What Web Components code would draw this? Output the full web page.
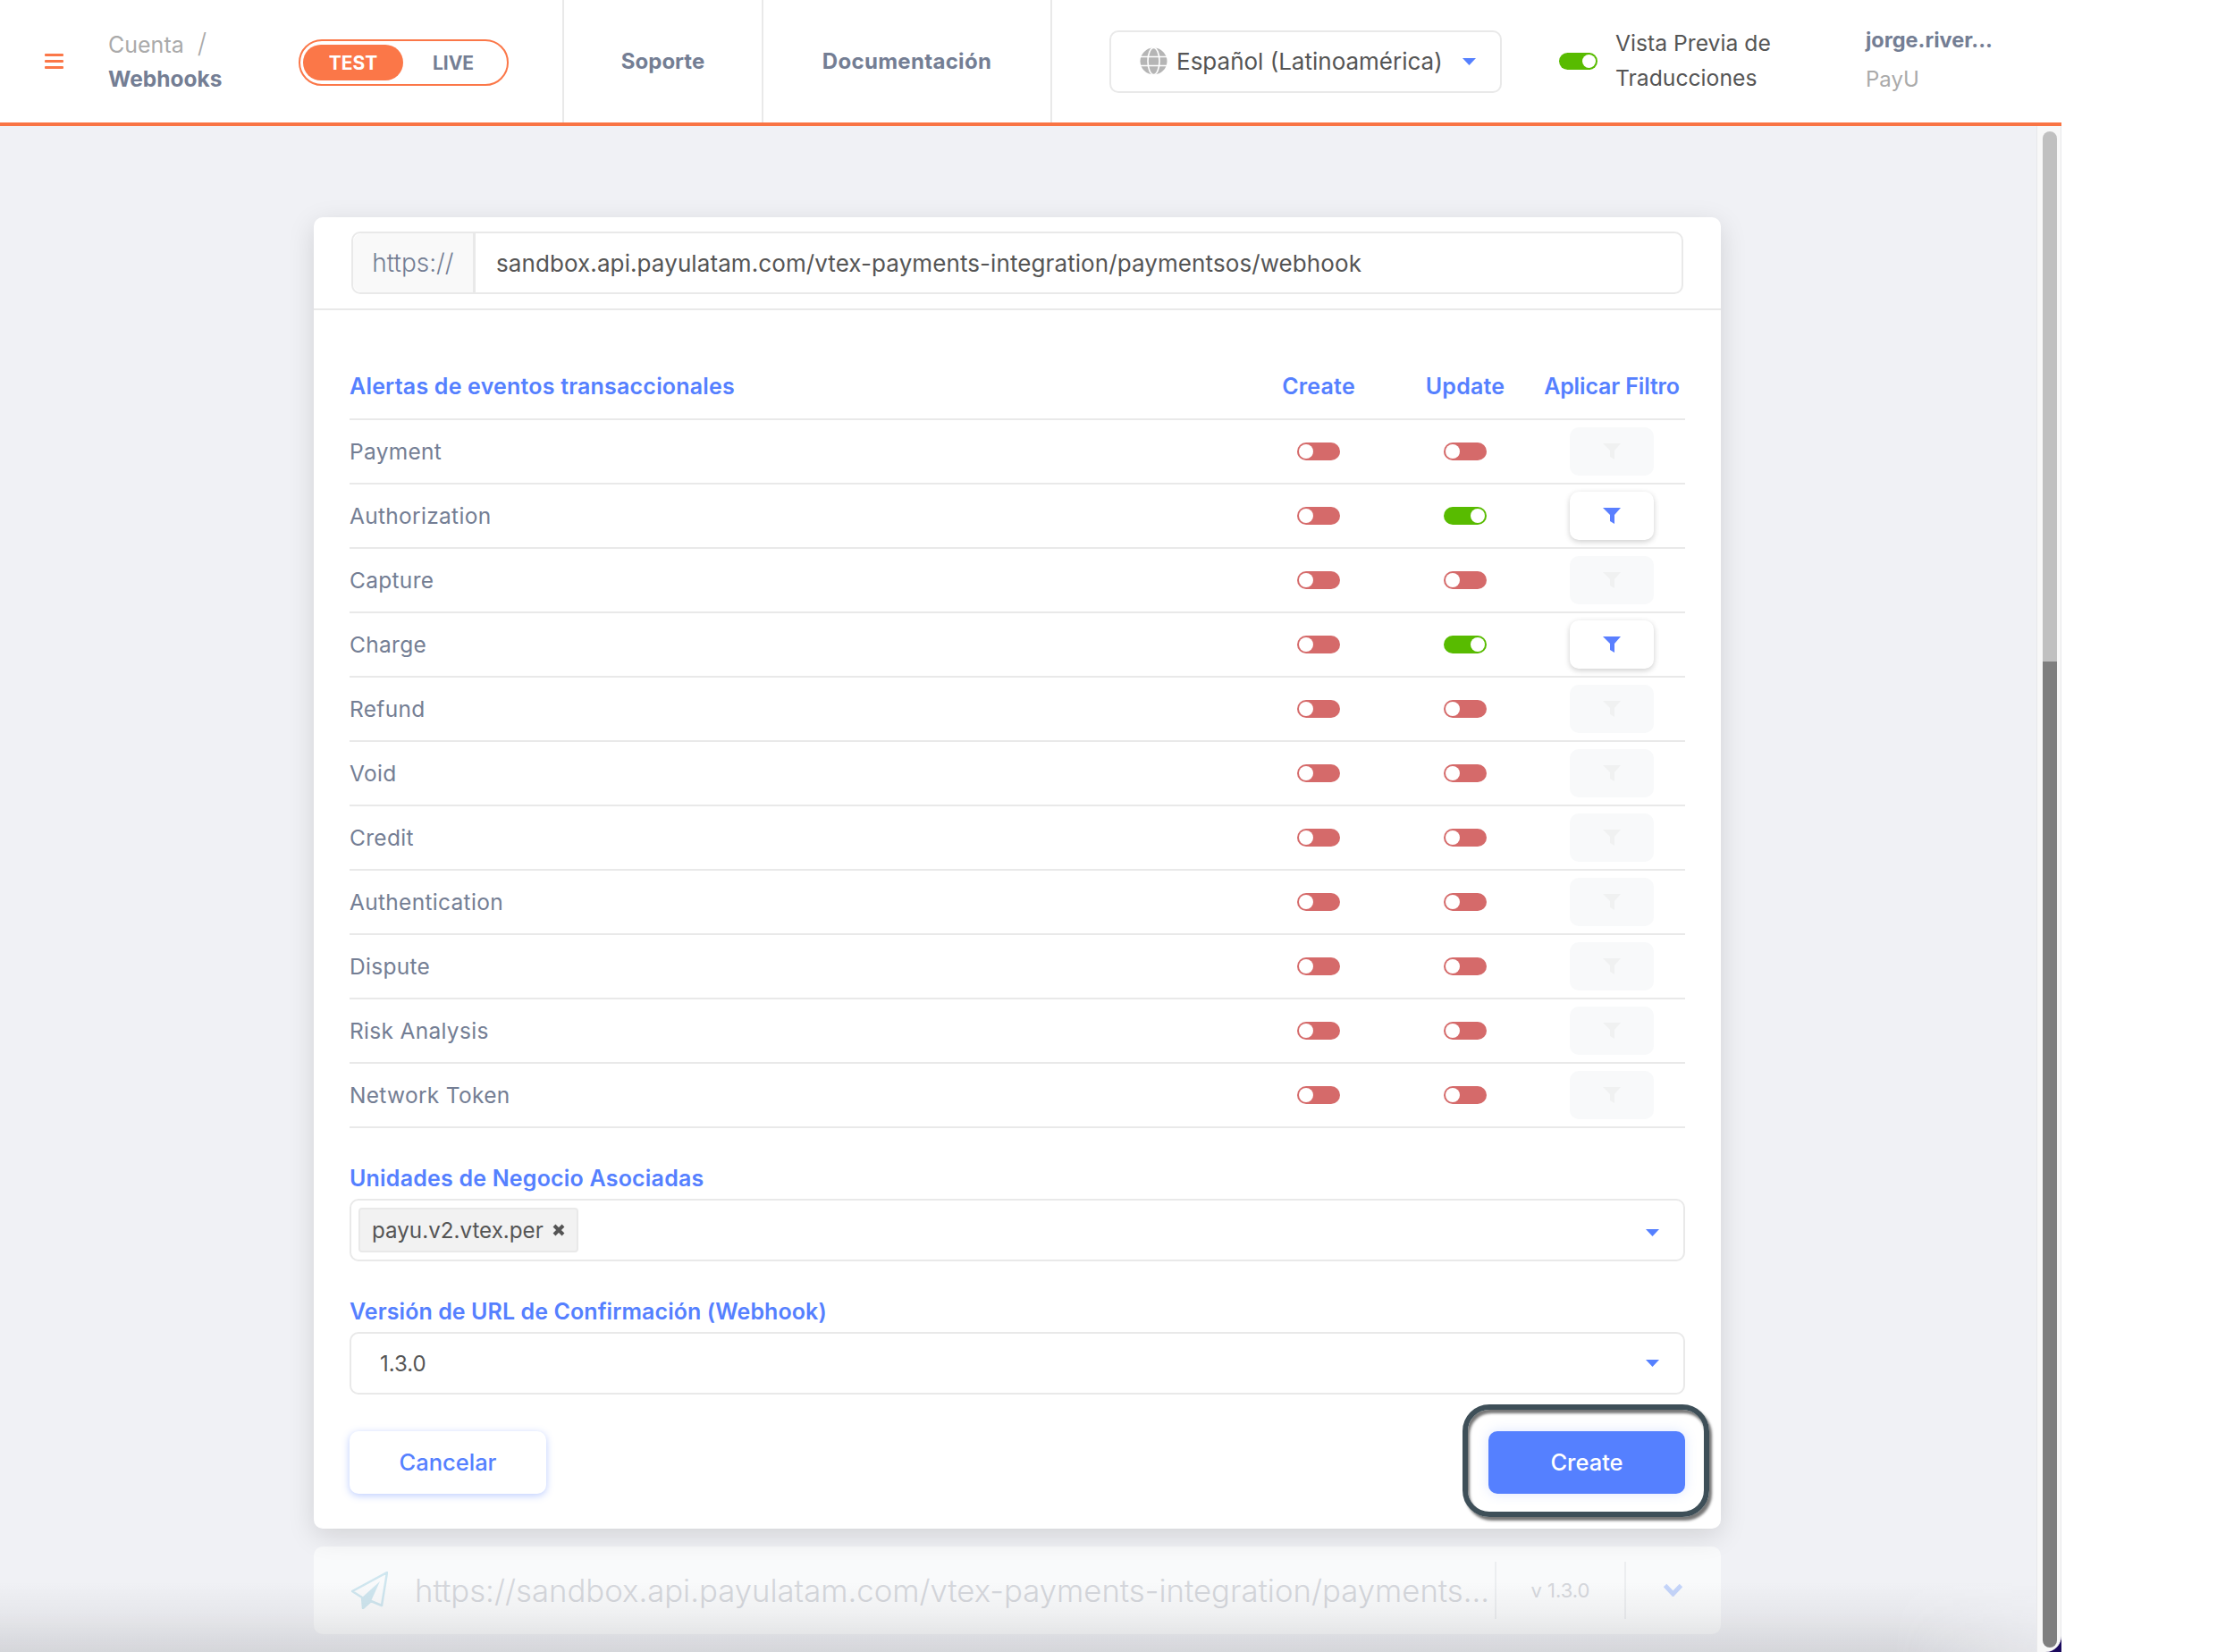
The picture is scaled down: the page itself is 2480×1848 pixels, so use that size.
<!DOCTYPE html>
<html lang="es">
<head>
<meta charset="utf-8">
<title>Webhooks</title>
<style>
  html, body { margin: 0; background: #fff; }
  body { width: 2480px; height: 1848px; overflow: hidden; font-family: Inter, "Liberation Sans", sans-serif; }
</style>
</head>
<body>
<app-page>
  <app-header slot="header"></app-header>
  <webhook-form>
    <event-row name="Payment"></event-row>
    <event-row name="Authorization" update></event-row>
    <event-row name="Capture"></event-row>
    <event-row name="Charge" update></event-row>
    <event-row name="Refund"></event-row>
    <event-row name="Void"></event-row>
    <event-row name="Credit"></event-row>
    <event-row name="Authentication"></event-row>
    <event-row name="Dispute"></event-row>
    <event-row name="Risk Analysis"></event-row>
    <event-row name="Network Token"></event-row>
  </webhook-form>
  <webhook-item></webhook-item>
</app-page>

<script>
const CARET = `<svg width="15" height="8" viewBox="0 0 15 8"><path d="M0 0h15L7.5 8z" fill="#5580ff"/></svg>`;
const FUNNEL = `<svg width="20" height="20" viewBox="0 0 20 20"><path d="M0 1h20l-7 8v10l-5-3V9z" fill="currentColor"/></svg>`;

// small helper, every element here only needs a static shadow root
class Base extends HTMLElement {
    constructor() {
        super();
        this.attachShadow({mode: "open"});
    }
    connectedCallback() {
        this.shadowRoot.innerHTML = this.render();
    }
}

class AppPage extends Base {
    render() {
        return `
        <style>
            :host { display: flex; flex-direction: column; width: 2306px; height: 1848px; background: #f0f1f5; overflow: hidden; position: relative; }
            .body { flex: 1; display: flex; min-height: 0; }
            main { flex: 1; padding: 102px 0 0 351px; }
            .fade { position: absolute; left: 0; right: 28px; bottom: 0; height: 78px; pointer-events: none;
                background: linear-gradient(to bottom, rgba(60,60,66,0), rgba(60,60,66,.05) 45%, rgba(60,60,66,.15));
                -webkit-mask-image: linear-gradient(to right, #000 93%, rgba(0,0,0,.4)); }
            .edge { width: 28px; background: #1b0a5e; display: flex; }
            .bar { flex: 1; box-sizing: border-box; padding: 6px 4px 5px 6px; background: #f8f8f8; border-left: 1px solid #e8e8ea; border-right: 1px solid #e8e8ea; border-bottom-right-radius: 18px; display: flex; }
            .thumb { flex: 1; border-radius: 8px; background: linear-gradient(to bottom, #c0c0c0 0, #c0c0c0 593px, #7f7f7f 593px); }
        </style>
        <slot name="header"></slot>
        <div class="body">
            <main><slot></slot></main>
            <div class="edge"><div class="bar"><div class="thumb"></div></div></div>
        </div>
        <div class="fade"></div>`;
    }
}

class AppHeader extends Base {
    render() {
        return `
        <style>
            :host { display: flex; align-items: stretch; height: 137px; background: #fff; border-bottom: 4px solid #f97444; font-size: 24px; flex: none; }
            .burger { width: 21px; margin-left: 50px; align-self: center; display: flex; flex-direction: column; gap: 4px; }
            .burger i { height: 3px; background: #fb7748; border-radius: 1px; }
            .crumbs { margin: -2px 0 0 50px; width: 213px; align-self: center; line-height: 38px; color: #aaa; font-size: 25px; }
            .crumbs b { display: block; font-weight: 700; font-size: 24.5px; color: #747e94; }
            .crumbs span { font-size: 30px; margin-left: 8px; font-weight: 300; }
            .mode { align-self: center; width: 235px; height: 52px; box-sizing: border-box; border: 2px solid #fb7748; border-radius: 26px; padding: 4px 3px; display: flex; font-weight: 700; font-size: 21px; color: #747e94; margin: 3px 60px 0 0; }
            .mode span { width: 112px; display: flex; align-items: center; justify-content: center; border-radius: 20px; }
            .mode .on { background: #fb7748; color: #fff; }
            .link { border-left: 2px solid #e9e9e9; display: flex; align-items: center; justify-content: center; font-weight: 700; color: #747e94; font-size: 24px; }
            .soporte { width: 221px; }
            .docs { width: 321px; letter-spacing: .3px; }
            .end { border-left: 2px solid #e9e9e9; flex: 1; display: flex; align-items: center; padding-left: 64px; }
            .lang { width: 439px; height: 70px; box-sizing: border-box; border: 2px solid #e9e9e9; border-radius: 10px; display: flex; align-items: center; padding-left: 32px; color: #555; font-size: 26px; }
            .lang svg:first-child { margin-right: 10px; }
            .lang span { width: 320px; white-space: nowrap; }
            .preview { margin-left: 64px; width: 343px; display: flex; align-items: center; color: #555; line-height: 39px; font-size: 24.7px; }
            .preview div { margin: -1px 0 0 20px; }
            .user { line-height: 44px; color: #aaa; margin-top: -4px; }
            .user b { display: block; font-weight: 700; color: #747e94; font-size: 23.5px; }
        </style>
        <div class="burger"><i></i><i></i><i></i></div>
        <div class="crumbs">Cuenta <span>/</span><b>Webhooks</b></div>
        <div class="mode"><span class="on">TEST</span><span>LIVE</span></div>
        <div class="link soporte">Soporte</div>
        <div class="link docs">Documentación</div>
        <div class="end">
            <div class="lang">
                <svg width="31" height="31" viewBox="0 0 31 31" fill="none" stroke="#fff" stroke-width="1.6"><circle cx="15.5" cy="15.500" r="15" fill="#b5b5b5" stroke="none"/><path d="M0 10.500h31M0 20.500h31"/><ellipse cx="15.500" cy="15.500" rx="6.500" ry="15"/></svg>
                <span>Español (Latinoamérica)</span>${CARET}
            </div>
            <div class="preview"><toggle-switch on></toggle-switch><div>Vista Previa de<br>Traducciones</div></div>
            <div class="user"><b>jorge.river...</b>PayU</div>
        </div>`;
    }
}

class ToggleSwitch extends Base {
    render() {
        const on = this.hasAttribute("on");
        return `
        <style>
            :host { display: flex; flex: none; box-sizing: border-box; width: 43px; height: 19px; padding: 2px; border-radius: 10px; background: ${on ? "#58bb00" : "#d56a6a"}; justify-content: ${on ? "flex-end" : "flex-start"}; }
            i { width: 15px; height: 15px; border-radius: 50%; background: #fff; }
            :host([size="row"]) { width: 48px; height: 20px; }
            :host([size="row"]) i { width: 16px; height: 16px; }
        </style>
        <i></i>`;
    }
}

class FilterButton extends Base {
    render() {
        return `
        <style>
            :host { display: flex; align-items: center; justify-content: center; width: 94px; height: 54px; border-radius: 10px; background: #f8f9fa; color: #f0f1f1; }
            :host([active]) { background: #fff; color: #5a7fff; box-shadow: 0 2px 6px rgba(0,0,0,.2); }
        </style>
        ${FUNNEL}`;
    }
}

class EventRow extends Base {
    render() {
        const update = this.hasAttribute("update");
        return `
        <style>
            :host { display: grid; grid-template-columns: 1002px 164px 164px 164px; height: 70px; border-bottom: 2px solid #e9e9e9; align-items: center; color: #747e94; font-size: 24.5px; letter-spacing: .3px; }
            .c { display: flex; justify-content: center; }
        </style>
        <div>${this.getAttribute("name")}</div>
        <div class="c"><toggle-switch size="row"></toggle-switch></div>
        <div class="c"><toggle-switch size="row" ${update ? "on" : ""}></toggle-switch></div>
        <div class="c"><filter-button ${update ? "active" : ""}></filter-button></div>`;
    }
}

class SelectBox extends Base {
    render() {
        return `
        <style>
            :host { display: flex; align-items: center; box-sizing: border-box; height: 70px; border: 2px solid #e9e9e9; border-radius: 10px; padding: 0 27px 0 8px; color: #555; font-size: 24px; }
            .v { flex: 1; display: flex; }
            svg { flex: none; }
            :host([tags]) svg { margin-top: 6px; }
        </style>
        <div class="v"><slot></slot></div>${CARET}`;
    }
}

class FormChip extends Base {
    render() {
        return `
        <style>
            :host { display: flex; align-items: center; box-sizing: border-box; height: 50px; width: 246px; border: 2px solid #e9e9e9; border-radius: 4px; background: #f2f2f2; padding-left: 13px; color: #555; font-size: 24.2px; white-space: nowrap; }
            span { width: 202px; }
        </style>
        <span><slot></slot></span>
        <svg width="14" height="14" viewBox="0 0 14 14"><path d="M2 2l10 10M12 2L2 12" stroke="#555" stroke-width="4"/></svg>`;
    }
}

class WebhookForm extends Base {
    render() {
        return `
        <style>
            :host { display: block; position: relative; width: 1574px; height: 1467px; box-sizing: border-box; background: #fff; border-radius: 10px; box-shadow: 0 8px 30px rgba(0,0,0,.13); }
            .top { height: 104px; box-sizing: border-box; padding: 16px 42px 0 42px; border-bottom: 2px solid #e9e9e9; }
            .url { display: flex; height: 70px; box-sizing: border-box; border: 2px solid #e9e9e9; border-radius: 10px; color: #555; font-size: 26px; align-items: stretch; }
            .url em { font-style: normal; width: 134px; display: flex; align-items: center; justify-content: center; background: #f9f9f9; border-right: 3px solid #e9e9e9; color: #747e94; border-radius: 10px 0 0 10px; font-weight: 300; font-size: 28px; }
            .url span { padding-left: 23px; display: flex; align-items: center; letter-spacing: .09px; }
            .body { padding: 0 40px; }
            .head { display: grid; grid-template-columns: 1002px 164px 164px 164px; height: 123px; box-sizing: border-box; padding-top: 65px; border-bottom: 2px solid #e9e9e9; color: #5580ff; font-weight: 600; font-size: 25px; line-height: 40px; letter-spacing: .2px; }
            .head div + div { text-align: center; white-space: nowrap; }
            .head div:last-child { letter-spacing: -.15px; }
            .label { color: #5580ff; font-weight: 600; font-size: 25px; line-height: 36px; letter-spacing: .2px; }
            .one { margin-top: 38px; }
            .two { margin-top: 38px; letter-spacing: .08px; }
            select-box { margin-top: 5px; }
            .num { padding-left: 24px; }
            .foot { display: flex; justify-content: space-between; margin-top: 41px; font-size: 25.5px; }
            .btn { width: 220px; height: 70px; box-sizing: border-box; padding-bottom: 2px; border-radius: 10px; display: flex; align-items: center; justify-content: center; font-weight: 500; }
            .cancel { background: #fff; color: #5580ff; box-shadow: 0 2px 8px rgba(85,128,255,.4); }
            .create { background: #5580ff; color: #fff; box-shadow: 0 0 14px rgba(85,128,255,.2); position: relative; }
            .ring { position: absolute; left: -29px; top: -30px; right: -27px; bottom: -26px; border: 6px solid #3e4f58; border-radius: 30px; box-shadow: 3px 4px 3px #777, inset 2px 4px 3px #777; }
        </style>
        <div class="top"><div class="url"><em>https://</em><span>sandbox.api.payulatam.com/vtex-payments-integration/paymentsos/webhook</span></div></div>
        <div class="body">
            <div class="head"><div>Alertas de eventos transaccionales</div><div>Create</div><div>Update</div><div>Aplicar Filtro</div></div>
            <slot></slot>
            <div class="label one">Unidades de Negocio Asociadas</div>
            <select-box tags><form-chip>payu.v2.vtex.per</form-chip></select-box>
            <div class="label two">Versión de URL de Confirmación (Webhook)</div>
            <select-box><span class="num">1.3.0</span></select-box>
            <div class="foot">
                <div class="btn cancel">Cancelar</div>
                <div class="btn create">Create<div class="ring"></div></div>
            </div>
        </div>`;
    }
}

class WebhookItem extends Base {
    render() {
        return `
        <style>
            :host { display: flex; align-items: center; margin-top: 20px; width: 1574px; height: 98px; box-sizing: border-box; padding-left: 42px; background: #f9fafb; border-radius: 10px; color: #d5d7dc; font-weight: 300; }
            svg.plane { flex: none; margin-right: 30px; }
            .url { width: 1208px; font-size: 34.7px; white-space: nowrap; }
            .ver { width: 147px; height: 64px; box-sizing: border-box; border-left: 2px solid #eceef0; border-right: 2px solid #eceef0; font-size: 22px; display: flex; align-items: center; justify-content: center; font-weight: 400; }
            svg.chev { margin-left: 42px; }
        </style>
        <svg class="plane" width="41" height="42" viewBox="0 0 41 42" fill="none" stroke="#cfe6ef" stroke-width="2.500" stroke-linejoin="round"><path d="M40 1L1 22l11 7 1 12 9-8 12 5z"/><path d="M12 29L32 11 22 33l-9 8z" fill="#cfe6ef" stroke="none"/></svg>
        <div class="url">https://sandbox.api.payulatam.com/vtex-payments-integration/payments...</div>
        <div class="ver">v 1.3.0</div>
        <svg class="chev" width="21" height="14" viewBox="0 0 21 14"><path d="M1.500 1.500l9 9.500 9-9.500" fill="none" stroke="#c5d5fa" stroke-width="5"/></svg>`;
    }
}

customElements.define('app-page', AppPage);
customElements.define('app-header', AppHeader);
customElements.define('toggle-switch', ToggleSwitch);
customElements.define('filter-button', FilterButton);
customElements.define('event-row', EventRow);
customElements.define('select-box', SelectBox);
customElements.define('form-chip', FormChip);
customElements.define('webhook-form', WebhookForm);
customElements.define('webhook-item', WebhookItem);
</script>
</body>
</html>
